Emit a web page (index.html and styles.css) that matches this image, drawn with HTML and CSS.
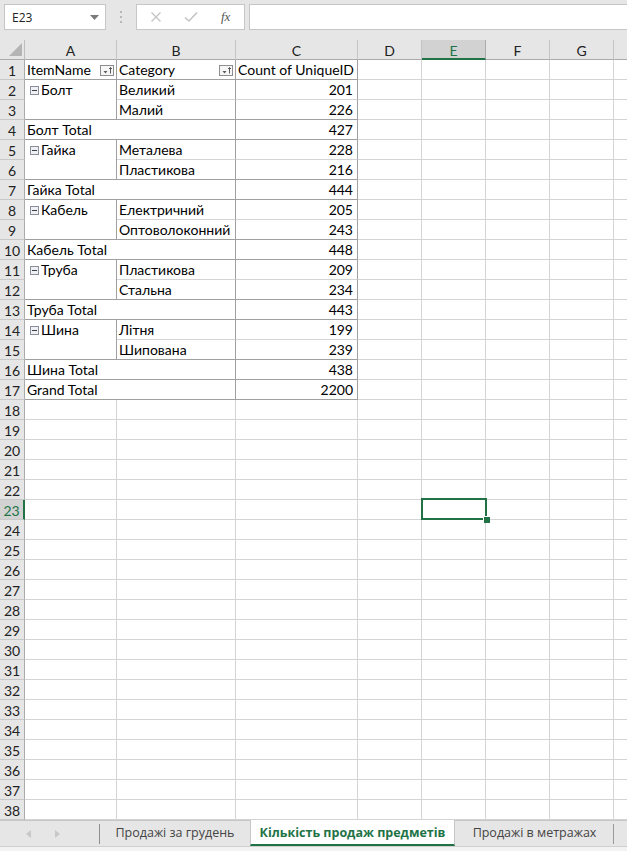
FILE: index.html
```html
<!DOCTYPE html>
<html>
<head>
<meta charset="utf-8">
<link rel="stylesheet" href="styles.css">
</head>
<body>
<div class="topbar">
  <div class="namebox"><span>E23</span><svg class="nbarrow" width="9" height="5" viewBox="0 0 9 5"><polygon points="0,0 9,0 4.5,5" fill="#7a7a7a"/></svg></div>
  <div class="dots"><i></i><i></i><i></i></div>
  <div class="fbtns">
    <svg width="12" height="12" viewBox="0 0 12 12"><path d="M1.5 1.5 L10.5 10.5 M10.5 1.5 L1.5 10.5" stroke="#c4c4c4" stroke-width="1.4"/></svg>
    <svg width="14" height="12" viewBox="0 0 14 12"><path d="M1 6.5 L5 10 L13 1.5" stroke="#c4c4c4" stroke-width="1.6" fill="none"/></svg>
    <span class="fx">fx</span>
  </div>
  <div class="finput"></div>
</div>

<div class="sheet">
  <div class="corner"><svg width="13" height="13" viewBox="0 0 13 13"><polygon points="13,0 13,13 0,13" fill="#b4b4b4"/></svg></div>
  <div class="ch">A</div><div class="ch">B</div><div class="ch">C</div><div class="ch">D</div><div class="ch sel">E</div><div class="ch">F</div><div class="ch">G</div><div class="ch last"></div>

  <div class="rh">1</div>
  <div class="c pv hd"><span>ItemName</span><svg class="flt" width="14" height="11" viewBox="0 0 14 11"><rect x="0.5" y="0.5" width="13" height="10" fill="#f6f6f6" stroke="#8e8e8e"/><polygon points="3.5,6 7.5,6 5.5,8.5" fill="#5a5a5a"/><path d="M10.5 2.5 V8.5 M9 4 L10.5 2.5 L12 4" stroke="#5a5a5a" stroke-width="1" fill="none"/></svg></div>
  <div class="c pv hd"><span>Category</span><svg class="flt" width="14" height="11" viewBox="0 0 14 11"><rect x="0.5" y="0.5" width="13" height="10" fill="#f6f6f6" stroke="#8e8e8e"/><polygon points="3.5,6 7.5,6 5.5,8.5" fill="#5a5a5a"/><path d="M10.5 2.5 V8.5 M9 4 L10.5 2.5 L12 4" stroke="#5a5a5a" stroke-width="1" fill="none"/></svg></div>
  <div class="c pv">Count of UniqueID</div>
  <div class="c"></div><div class="c"></div><div class="c"></div><div class="c"></div><div class="c last"></div>

  <div class="rh">2</div>
  <div class="c pv grp"><svg class="mn" width="9" height="9" viewBox="0 0 9 9"><rect x="0.5" y="0.5" width="8" height="8" fill="#eef0f3" stroke="#8a8f99"/><path d="M2 4.5 H7" stroke="#3a3f4a" stroke-width="1"/></svg>Болт</div>
  <div class="c pm">Великий</div><div class="c pm num">201</div>
  <div class="c"></div><div class="c"></div><div class="c"></div><div class="c"></div><div class="c last"></div>

  <div class="rh">3</div>
  <div class="c pv">Малий</div><div class="c pv num">226</div>
  <div class="c"></div><div class="c"></div><div class="c"></div><div class="c"></div><div class="c last"></div>

  <div class="rh">4</div>
  <div class="c pv tot">Болт Total</div><div class="c pv num">427</div>
  <div class="c"></div><div class="c"></div><div class="c"></div><div class="c"></div><div class="c last"></div>

  <div class="rh">5</div>
  <div class="c pv grp"><svg class="mn" width="9" height="9" viewBox="0 0 9 9"><rect x="0.5" y="0.5" width="8" height="8" fill="#eef0f3" stroke="#8a8f99"/><path d="M2 4.5 H7" stroke="#3a3f4a" stroke-width="1"/></svg>Гайка</div>
  <div class="c pm">Металева</div><div class="c pm num">228</div>
  <div class="c"></div><div class="c"></div><div class="c"></div><div class="c"></div><div class="c last"></div>

  <div class="rh">6</div>
  <div class="c pv">Пластикова</div><div class="c pv num">216</div>
  <div class="c"></div><div class="c"></div><div class="c"></div><div class="c"></div><div class="c last"></div>

  <div class="rh">7</div>
  <div class="c pv tot">Гайка Total</div><div class="c pv num">444</div>
  <div class="c"></div><div class="c"></div><div class="c"></div><div class="c"></div><div class="c last"></div>

  <div class="rh">8</div>
  <div class="c pv grp"><svg class="mn" width="9" height="9" viewBox="0 0 9 9"><rect x="0.5" y="0.5" width="8" height="8" fill="#eef0f3" stroke="#8a8f99"/><path d="M2 4.5 H7" stroke="#3a3f4a" stroke-width="1"/></svg>Кабель</div>
  <div class="c pm">Електричний</div><div class="c pm num">205</div>
  <div class="c"></div><div class="c"></div><div class="c"></div><div class="c"></div><div class="c last"></div>

  <div class="rh">9</div>
  <div class="c pv">Оптоволоконний</div><div class="c pv num">243</div>
  <div class="c"></div><div class="c"></div><div class="c"></div><div class="c"></div><div class="c last"></div>

  <div class="rh">10</div>
  <div class="c pv tot">Кабель Total</div><div class="c pv num">448</div>
  <div class="c"></div><div class="c"></div><div class="c"></div><div class="c"></div><div class="c last"></div>

  <div class="rh">11</div>
  <div class="c pv grp"><svg class="mn" width="9" height="9" viewBox="0 0 9 9"><rect x="0.5" y="0.5" width="8" height="8" fill="#eef0f3" stroke="#8a8f99"/><path d="M2 4.5 H7" stroke="#3a3f4a" stroke-width="1"/></svg>Труба</div>
  <div class="c pm">Пластикова</div><div class="c pm num">209</div>
  <div class="c"></div><div class="c"></div><div class="c"></div><div class="c"></div><div class="c last"></div>

  <div class="rh">12</div>
  <div class="c pv">Стальна</div><div class="c pv num">234</div>
  <div class="c"></div><div class="c"></div><div class="c"></div><div class="c"></div><div class="c last"></div>

  <div class="rh">13</div>
  <div class="c pv tot">Труба Total</div><div class="c pv num">443</div>
  <div class="c"></div><div class="c"></div><div class="c"></div><div class="c"></div><div class="c last"></div>

  <div class="rh">14</div>
  <div class="c pv grp"><svg class="mn" width="9" height="9" viewBox="0 0 9 9"><rect x="0.5" y="0.5" width="8" height="8" fill="#eef0f3" stroke="#8a8f99"/><path d="M2 4.5 H7" stroke="#3a3f4a" stroke-width="1"/></svg>Шина</div>
  <div class="c pm">Літня</div><div class="c pm num">199</div>
  <div class="c"></div><div class="c"></div><div class="c"></div><div class="c"></div><div class="c last"></div>

  <div class="rh">15</div>
  <div class="c pv">Шипована</div><div class="c pv num">239</div>
  <div class="c"></div><div class="c"></div><div class="c"></div><div class="c"></div><div class="c last"></div>

  <div class="rh">16</div>
  <div class="c pv tot">Шина Total</div><div class="c pv num">438</div>
  <div class="c"></div><div class="c"></div><div class="c"></div><div class="c"></div><div class="c last"></div>

  <div class="rh">17</div>
  <div class="c pv tot">Grand Total</div><div class="c pv num">2200</div>
  <div class="c"></div><div class="c"></div><div class="c"></div><div class="c"></div><div class="c last"></div>

  <div class="rh">18</div><div class="c"></div><div class="c"></div><div class="c"></div><div class="c"></div><div class="c"></div><div class="c"></div><div class="c"></div><div class="c last"></div>
  <div class="rh">19</div><div class="c"></div><div class="c"></div><div class="c"></div><div class="c"></div><div class="c"></div><div class="c"></div><div class="c"></div><div class="c last"></div>
  <div class="rh">20</div><div class="c"></div><div class="c"></div><div class="c"></div><div class="c"></div><div class="c"></div><div class="c"></div><div class="c"></div><div class="c last"></div>
  <div class="rh">21</div><div class="c"></div><div class="c"></div><div class="c"></div><div class="c"></div><div class="c"></div><div class="c"></div><div class="c"></div><div class="c last"></div>
  <div class="rh">22</div><div class="c"></div><div class="c"></div><div class="c"></div><div class="c"></div><div class="c"></div><div class="c"></div><div class="c"></div><div class="c last"></div>
  <div class="rh sel">23</div><div class="c"></div><div class="c"></div><div class="c"></div><div class="c"></div><div class="c active"><div class="selbox"></div><div class="handle"></div></div><div class="c"></div><div class="c"></div><div class="c last"></div>
  <div class="rh">24</div><div class="c"></div><div class="c"></div><div class="c"></div><div class="c"></div><div class="c"></div><div class="c"></div><div class="c"></div><div class="c last"></div>
  <div class="rh">25</div><div class="c"></div><div class="c"></div><div class="c"></div><div class="c"></div><div class="c"></div><div class="c"></div><div class="c"></div><div class="c last"></div>
  <div class="rh">26</div><div class="c"></div><div class="c"></div><div class="c"></div><div class="c"></div><div class="c"></div><div class="c"></div><div class="c"></div><div class="c last"></div>
  <div class="rh">27</div><div class="c"></div><div class="c"></div><div class="c"></div><div class="c"></div><div class="c"></div><div class="c"></div><div class="c"></div><div class="c last"></div>
  <div class="rh">28</div><div class="c"></div><div class="c"></div><div class="c"></div><div class="c"></div><div class="c"></div><div class="c"></div><div class="c"></div><div class="c last"></div>
  <div class="rh">29</div><div class="c"></div><div class="c"></div><div class="c"></div><div class="c"></div><div class="c"></div><div class="c"></div><div class="c"></div><div class="c last"></div>
  <div class="rh">30</div><div class="c"></div><div class="c"></div><div class="c"></div><div class="c"></div><div class="c"></div><div class="c"></div><div class="c"></div><div class="c last"></div>
  <div class="rh">31</div><div class="c"></div><div class="c"></div><div class="c"></div><div class="c"></div><div class="c"></div><div class="c"></div><div class="c"></div><div class="c last"></div>
  <div class="rh">32</div><div class="c"></div><div class="c"></div><div class="c"></div><div class="c"></div><div class="c"></div><div class="c"></div><div class="c"></div><div class="c last"></div>
  <div class="rh">33</div><div class="c"></div><div class="c"></div><div class="c"></div><div class="c"></div><div class="c"></div><div class="c"></div><div class="c"></div><div class="c last"></div>
  <div class="rh">34</div><div class="c"></div><div class="c"></div><div class="c"></div><div class="c"></div><div class="c"></div><div class="c"></div><div class="c"></div><div class="c last"></div>
  <div class="rh">35</div><div class="c"></div><div class="c"></div><div class="c"></div><div class="c"></div><div class="c"></div><div class="c"></div><div class="c"></div><div class="c last"></div>
  <div class="rh">36</div><div class="c"></div><div class="c"></div><div class="c"></div><div class="c"></div><div class="c"></div><div class="c"></div><div class="c"></div><div class="c last"></div>
  <div class="rh">37</div><div class="c"></div><div class="c"></div><div class="c"></div><div class="c"></div><div class="c"></div><div class="c"></div><div class="c"></div><div class="c last"></div>
  <div class="rh">38</div><div class="c"></div><div class="c"></div><div class="c"></div><div class="c"></div><div class="c"></div><div class="c"></div><div class="c"></div><div class="c last"></div>
</div>

<div class="tabbar">
  <div class="nav">
    <svg width="5" height="8" viewBox="0 0 5 8"><polygon points="5,0 5,8 0,4" fill="#c8c8c8"/></svg>
    <svg width="5" height="8" viewBox="0 0 5 8"><polygon points="0,0 0,8 5,4" fill="#c8c8c8"/></svg>
  </div>
  <div class="tab t1">Продажі за грудень</div>
  <div class="tab active">Кількість продаж предметів</div>
  <div class="tab t3">Продажі в метражах</div>
  <div class="tabrest"></div>
</div>
<div class="footer"></div>
</body>
</html>
```

FILE: styles.css
```css
html, body {
  margin: 0;
  padding: 0;
}
body {
  width: 627px;
  height: 851px;
  overflow: hidden;
  background: #ffffff;
  font-family: "Lato", "Liberation Sans", sans-serif;
  color: #000;
}

/* formula bar */
.topbar {
  height: 40px;
  box-sizing: border-box;
  background: #e6e6e6;
  display: flex;
  align-items: flex-start;
  padding: 4px 0 0 4px;
}
.namebox {
  width: 102px;
  height: 26px;
  box-sizing: border-box;
  background: #fff;
  border: 1px solid #c6c6c6;
  display: flex;
  align-items: center;
  justify-content: space-between;
  padding: 0 6px 0 7px;
  font-family: "Open Sans", "Noto Sans", sans-serif;
  font-size: 12px;
  color: #222;
}
.dots {
  width: 30px;
  height: 26px;
  display: flex;
  flex-direction: column;
  align-items: center;
  justify-content: center;
  gap: 3px;
}
.dots i {
  display: block;
  width: 2px;
  height: 2px;
  background: #b8b8b8;
}
.fbtns {
  width: 109px;
  height: 26px;
  box-sizing: border-box;
  background: #fff;
  border: 1px solid #c6c6c6;
  display: flex;
  align-items: center;
  padding: 0 0 0 13px;
  gap: 22px;
}
.fx {
  font-family: "Liberation Serif", serif;
  font-style: italic;
  font-size: 13px;
  color: #555;
  margin-left: 1px;
}
.finput {
  flex: 1;
  height: 26px;
  margin-left: 4px;
  box-sizing: border-box;
  background: #fff;
  border: 1px solid #c6c6c6;
  border-right: none;
}

/* sheet grid */
.sheet {
  display: grid;
  grid-template-columns: 25px 92px 119px 122px 64px 64px 64px 64px 13px;
  grid-auto-rows: 20px;
  font-size: 14px;
}
.corner, .ch, .rh, .c {
  box-sizing: border-box;
}
.corner {
  background: #e6e6e6;
  border-right: 1px solid #bdbdbd;
  border-bottom: 1px solid #ababab;
  display: flex;
  align-items: flex-end;
  justify-content: flex-end;
  padding: 0 2px 3px 0;
}
.ch {
  background: #e6e6e6;
  border-right: 1px solid #c4c4c4;
  border-bottom: 1px solid #ababab;
  display: flex;
  align-items: center;
  justify-content: center;
  color: #222;
  font-size: 14px;
  padding-top: 2px;
}
.ch.last {
  border-right: none;
}
.ch.sel {
  background: #d2d2d2;
  color: #217346;
  border-bottom: 2px solid #217346;
  border-right-color: #ababab;
}
.rh {
  background: #e6e6e6;
  border-right: 1px solid #ababab;
  border-bottom: 1px solid #c8c8c8;
  display: flex;
  align-items: center;
  justify-content: center;
  color: #222;
  font-size: 14px;
  padding-top: 1px;
}
.rh.sel {
  background: #d2d2d2;
  color: #217346;
  border-right: 2px solid #217346;
}
.c {
  border-right: 1px solid #d4d4d4;
  border-bottom: 1px solid #d4d4d4;
  padding: 1px 3px 0 2px;
  line-height: 18px;
  white-space: nowrap;
  overflow: visible;
  display: flex;
  align-items: flex-start;
}
.c.last {
  border-right: none;
}
.pv {
  border-right-color: #a0a0a0;
  border-bottom-color: #a0a0a0;
}
.pm {
  border-right-color: #a0a0a0;
}
.num {
  justify-content: flex-end;
  padding-right: 4px;
}
.hd {
  justify-content: space-between;
  padding-right: 2px;
}
.flt {
  margin-top: 4px;
}
.grp {
  grid-row: span 2;
  padding-left: 5px;
}
.mn {
  margin: 5px 2px 0 0;
  flex: none;
}
.tot {
  grid-column: span 2;
}
.active {
  position: relative;
}
.selbox {
  position: absolute;
  left: -1px;
  top: -2px;
  width: 66px;
  height: 22px;
  box-sizing: border-box;
  border: 2px solid #217346;
}
.handle {
  position: absolute;
  left: 61px;
  top: 16px;
  width: 6px;
  height: 6px;
  background: #217346;
  border: 1px solid #fff;
  border-right: none;
  border-bottom: none;
}

/* sheet tabs */
.tabbar {
  height: 27px;
  box-sizing: border-box;
  display: flex;
  background: #e6e6e6;
  border-bottom: 1px solid #cfcfcf;
  font-family: "Open Sans", "Noto Sans", sans-serif;
  font-size: 12.5px;
}
.nav {
  width: 100px;
  box-sizing: border-box;
  border-top: 1px solid #c6c6c6;
  display: flex;
  align-items: center;
  padding-left: 26px;
  gap: 24px;
  position: relative;
}
.nav::after {
  content: "";
  position: absolute;
  right: 0;
  top: 3px;
  width: 1px;
  height: 20px;
  background: #8e8e8e;
}
.tab {
  box-sizing: border-box;
  display: flex;
  align-items: center;
  justify-content: center;
  color: #444;
  padding-bottom: 2px;
}
.t1 {
  width: 150px;
  border-top: 1px solid #c6c6c6;
}
.tab.active {
  width: 205px;
  background: #fff;
  color: #217346;
  font-weight: 700;
  border-left: 1px solid #c6c6c6;
  border-right: 1px solid #c6c6c6;
  border-bottom: 2px solid #217346;
  padding-bottom: 0;
}
.t3 {
  width: 159px;
  border-top: 1px solid #c6c6c6;
  position: relative;
}
.t3::after {
  content: "";
  position: absolute;
  right: 0;
  top: 3px;
  width: 1px;
  height: 20px;
  background: #9a9a9a;
}
.tabrest {
  flex: 1;
  border-top: 1px solid #c6c6c6;
}
.footer {
  height: 4px;
  background: #f3f3f3;
}
```
